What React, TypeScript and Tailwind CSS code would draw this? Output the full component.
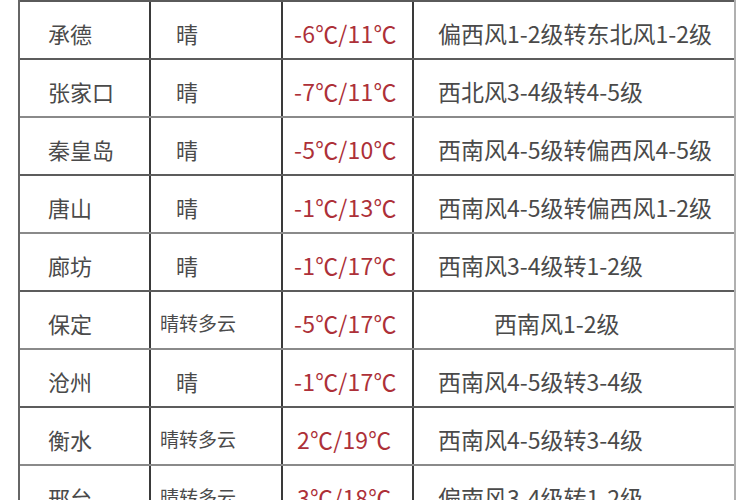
const rows = [
  { city: '承德', sky: '晴', temp: '-6℃/11℃', wind: '偏西风1-2级转东北风1-2级' },
  { city: '张家口', sky: '晴', temp: '-7℃/11℃', wind: '西北风3-4级转4-5级' },
  { city: '秦皇岛', sky: '晴', temp: '-5℃/10℃', wind: '西南风4-5级转偏西风4-5级' },
  { city: '唐山', sky: '晴', temp: '-1℃/13℃', wind: '西南风4-5级转偏西风1-2级' },
  { city: '廊坊', sky: '晴', temp: '-1℃/17℃', wind: '西南风3-4级转1-2级' },
  { city: '保定', sky: '晴转多云', temp: '-5℃/17℃', wind: '西南风1-2级' },
  { city: '沧州', sky: '晴', temp: '-1℃/17℃', wind: '西南风4-5级转3-4级' },
  { city: '衡水', sky: '晴转多云', temp: '2℃/19℃', wind: '西南风4-5级转3-4级' },
  { city: '邢台', sky: '晴转多云', temp: '3℃/18℃', wind: '偏南风3-4级转1-2级' },
];

const font = { fontFamily: '"Noto Sans CJK SC", "Noto Sans", sans-serif' };

export default function App() {
  return (
    <div className="w-[750px] h-[500px] overflow-hidden bg-white" style={font}>
      <div className="ml-[18px] w-[718px] border-l-2 border-r-2 border-l-[#666] border-r-[#b0b0b0]">
        <div className="grid grid-cols-[131px_132px_131px_320px] h-[2px] border-b-2 border-[#5a5a5a]">
          <div className="border-r-2 border-[#3a3a3a]" />
          <div className="border-r-2 border-[#3a3a3a]" />
          <div className="border-r-2 border-[#3a3a3a]" />
          <div />
        </div>
        {rows.map((r, i) => {
          const cloudy = r.sky.length > 1;
          const positive = !r.temp.startsWith('-');
          const short = r.wind.length < 8;
          return (
            <div
              key={i}
              className={`grid grid-cols-[131px_132px_131px_320px] h-[58px] border-b-2 ${
                i % 2 === 0 ? 'border-[#5c5c5c]' : 'border-[#8a8a8a]'
              }`}
            >
              <div className="flex items-center pt-[7px] pl-[28px] border-r-2 border-[#3a3a3a] text-[22px] text-[#4a4a4a]">
                {r.city}
              </div>
              <div
                className={`flex items-center pt-[7px] border-r-2 border-[#3a3a3a] text-[#4a4a4a] ${
                  cloudy ? 'pl-[9px] text-[19px]' : 'pl-[25px] text-[22px]'
                }`}
              >
                {r.sky}
              </div>
              <div
                className={`flex items-center pt-[7px] border-r-2 border-[#3a3a3a] text-[23px] tracking-[0.2px] text-[#ad3038] ${
                  positive ? 'pl-[14px]' : 'pl-[11px]'
                }`}
              >
                {r.temp}
              </div>
              <div
                className={`flex items-center pt-[7px] text-[23px] text-[#4a4a4a] whitespace-nowrap ${
                  short ? 'pl-[80px]' : 'pl-[24px]'
                }`}
              >
                {r.wind}
              </div>
            </div>
          );
        })}
      </div>
    </div>
  );
}
